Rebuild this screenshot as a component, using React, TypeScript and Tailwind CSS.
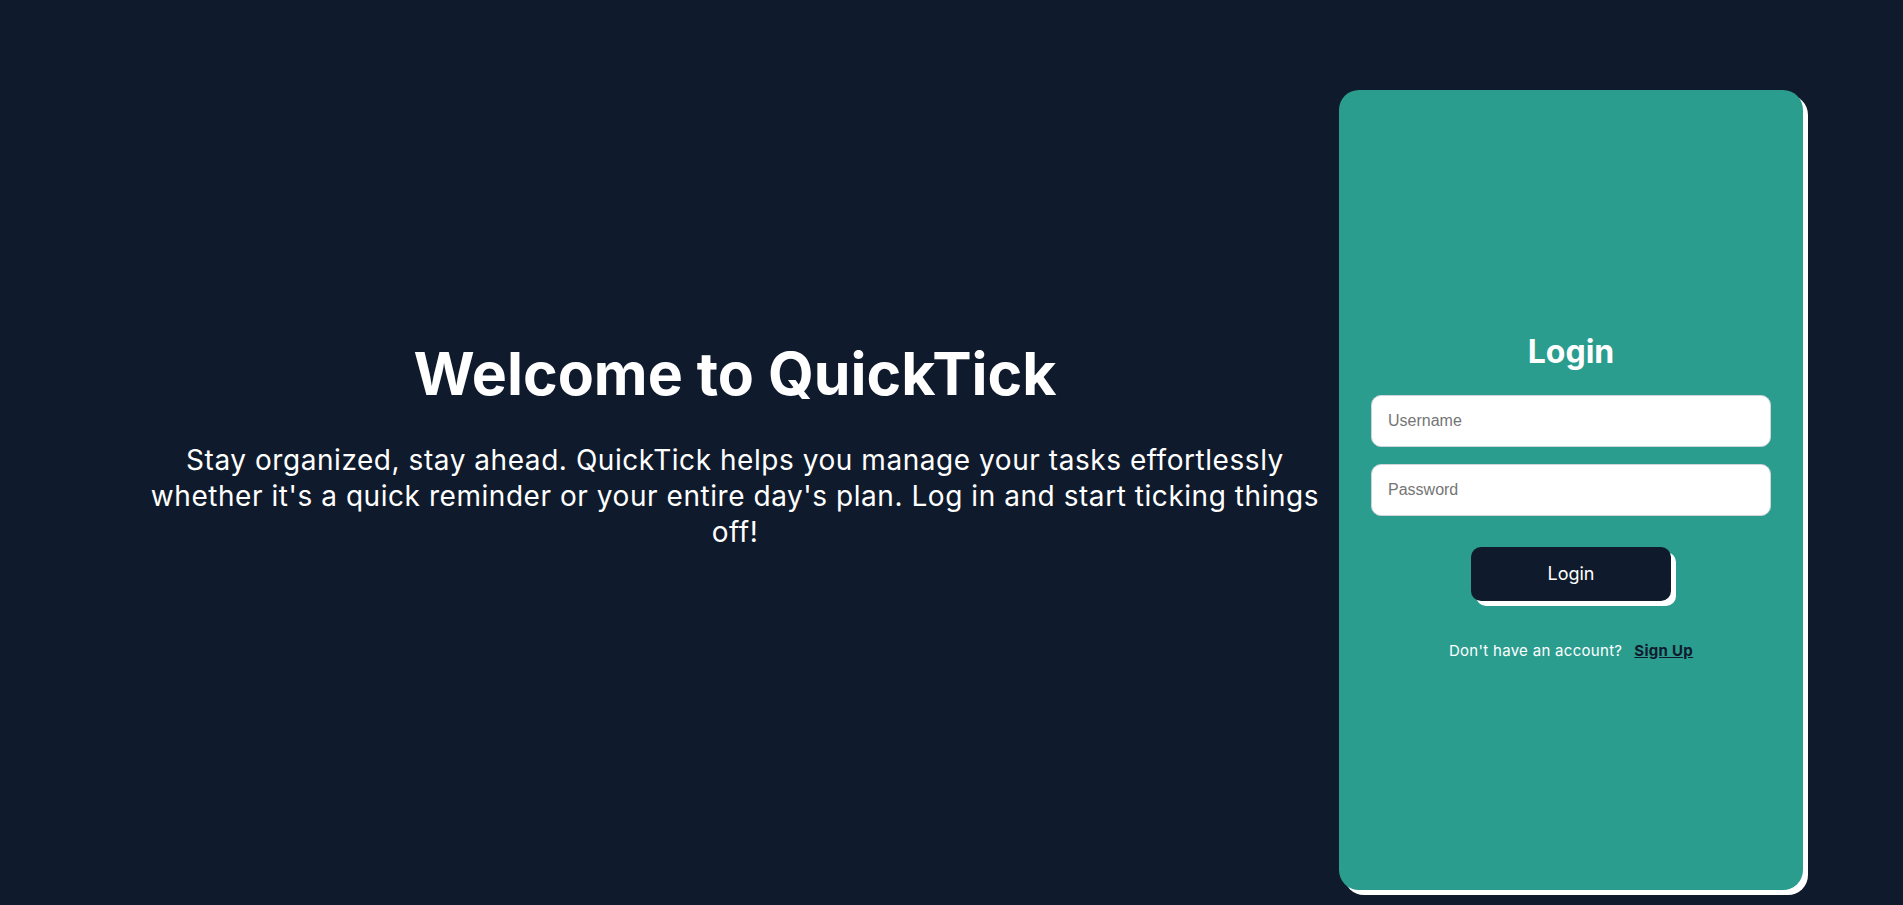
export default function App() {
  return (
    <div className="min-h-screen w-full bg-[#0f1b2c] font-['Inter',sans-serif] text-white flex items-start pl-[131px] pr-[100px] pt-[90px] pb-[14px]">
      <section className="flex-1 flex flex-col items-center text-center pt-[249px]">
        <h1 className="text-[59px] font-bold leading-[70px]">Welcome to QuickTick</h1>
        <p className="mt-[33px] text-[28px] leading-[36px] tracking-[0.55px]">
          Stay organized, stay ahead. QuickTick helps you manage your tasks effortlessly
          <br />
          whether it's a quick reminder or your entire day's plan. Log in and start ticking things off!
        </p>
      </section>

      <div className="w-[464px] h-[800px] shrink-0 bg-[#2a9d8f] rounded-[20px] shadow-[5px_5px_0_#ffffff] flex flex-col items-center justify-center px-8 pt-[12px]">
        <h2 className="text-[32px] font-bold leading-[40px]">Login</h2>
        <form className="w-full flex flex-col items-center mt-[23px]" onSubmit={e => e.preventDefault()}>
          <input
            type="text"
            placeholder="Username"
            className="w-full h-[52px] rounded-[10px] border border-[#cfd4d9] bg-white px-4 text-base text-gray-900 font-['Liberation_Sans',Arial,sans-serif] placeholder:text-[#757575] focus:outline-none"
          />
          <input
            type="password"
            placeholder="Password"
            className="w-full h-[52px] mt-[17px] rounded-[10px] border border-[#cfd4d9] bg-white px-4 text-base text-gray-900 font-['Liberation_Sans',Arial,sans-serif] placeholder:text-[#757575] focus:outline-none"
          />
          <button
            type="submit"
            className="mt-[31px] w-[200px] h-[54px] rounded-[10px] bg-[#0f1b2c] text-white text-[18px] shadow-[5px_5px_0_#ffffff]"
          >
            Login
          </button>
        </form>
        <p className="mt-[40px] text-[15px] leading-[20px] tracking-[0.3px]">
          Don't have an account?
          <a href="#" className="ml-3 font-bold text-[#0f1b2c] underline">Sign Up</a>
        </p>
      </div>
    </div>
  );
}
